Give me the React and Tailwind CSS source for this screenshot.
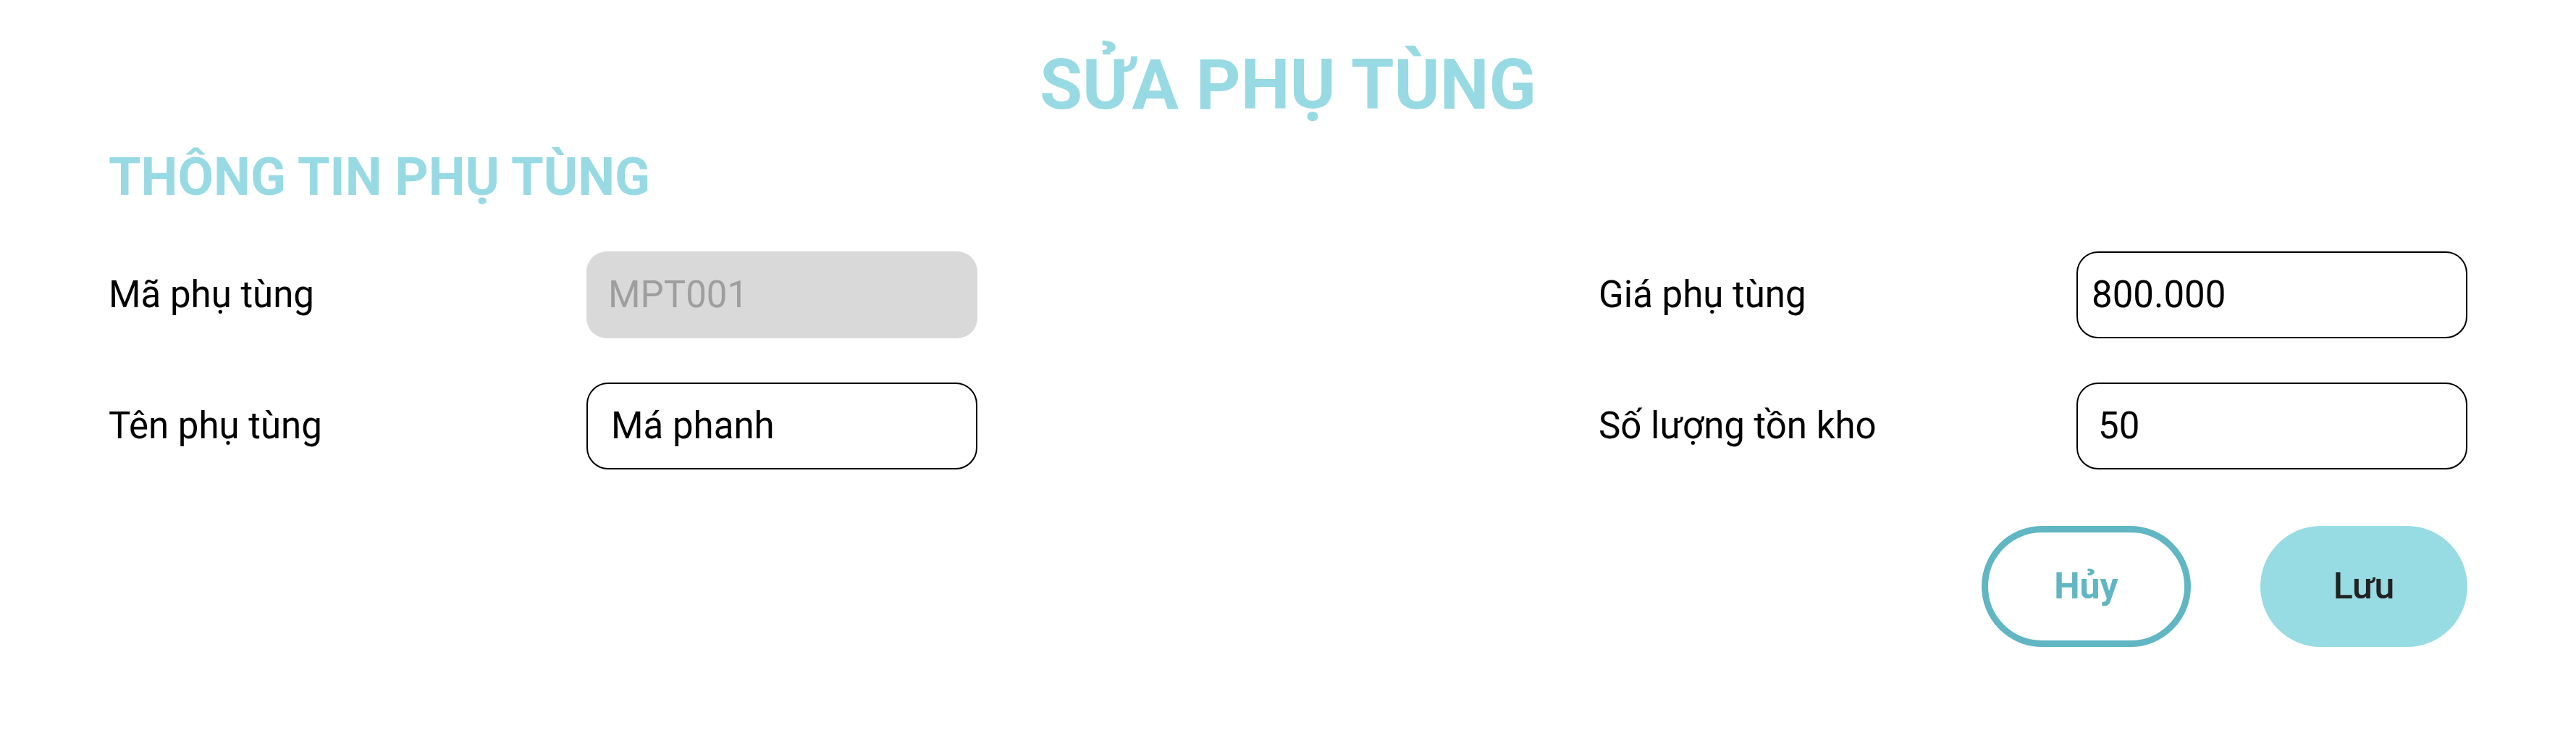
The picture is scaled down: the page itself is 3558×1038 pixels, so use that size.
import React from 'react';

const font = { fontFamily: 'Roboto, "Noto Sans", sans-serif' };

function Field({ label, value, disabled, pad }) {
    return (
        <div className="flex h-[120px] items-center">
            <div className="w-[660px] text-[51px] text-black">{label}</div>
            {disabled ? (
                <div className="flex h-full w-[540px] items-center rounded-[28px] bg-[#d9d9d9] pl-[30px] text-[51px] text-[#9e9e9e]">
                    {value}
                </div>
            ) : (
                <div className={`flex h-full w-[540px] items-center rounded-[30px] border-2 border-black bg-white text-[51px] text-black ${pad}`}>
                    {value}
                </div>
            )}
        </div>
    );
}

export default function App() {
    return (
        <div className="min-h-screen w-full bg-white pt-[61px]" style={font}>
            <h1 className="text-center text-[96px] font-bold leading-[112px] text-[#98dae3]">SỬA PHỤ TÙNG</h1>

            <div className="px-[150px]">
                <h2 className="mt-[30px] text-[72px] font-bold leading-[84px] text-[#98dae3]">THÔNG TIN PHỤ TÙNG</h2>

                <div className="mt-[60px] flex justify-between">
                    <div className="flex flex-col gap-[61px]">
                        <Field label="Mã phụ tùng" value="MPT001" disabled />
                        <Field label="Tên phụ tùng" value="Má phanh" pad="pl-[32px]" />
                    </div>
                    <div className="flex flex-col gap-[61px]">
                        <Field label="Giá phụ tùng" value="800.000" pad="pl-[19px]" />
                        <Field label="Số lượng tồn kho" value="50" pad="pl-[28px]" />
                    </div>
                </div>

                <div className="mt-[78px] flex justify-end gap-[96px]">
                    <button
                        type="button"
                        className="flex h-[167px] w-[289px] items-center justify-center rounded-full border-[9px] border-[#60b6c2] bg-white text-[50px] font-bold text-[#60b6c2]"
                    >
                        Hủy
                    </button>
                    <button
                        type="button"
                        className="flex h-[167px] w-[286px] items-center justify-center rounded-full bg-[#97dbe3] text-[50px] font-medium text-[#222222]"
                    >
                        Lưu
                    </button>
                </div>
            </div>
        </div>
    );
}
